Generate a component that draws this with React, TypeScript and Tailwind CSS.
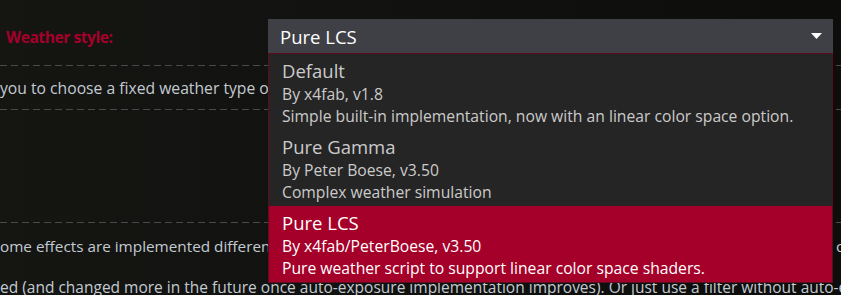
import React from "react";

const items = [
  {
    title: "Default",
    by: "By x4fab, v1.8",
    desc: "Simple built-in implementation, now with an linear color space option.",
    selected: false,
  },
  {
    title: "Pure Gamma",
    by: "By Peter Boese, v3.50",
    desc: "Complex weather simulation",
    selected: false,
  },
  {
    title: "Pure LCS",
    by: "By x4fab/PeterBoese, v3.50",
    desc: "Pure weather script to support linear color space shaders.",
    selected: true,
  },
];

function Dash() {
  return (
    <div className="h-px w-full bg-[repeating-linear-gradient(90deg,#4a4a4a_0px,#4a4a4a_7px,transparent_7px,transparent_11px)]" />
  );
}

export default function App() {
  return (
    <div className="relative w-[841px] h-[295px] overflow-hidden bg-gradient-to-r from-[#151612] via-[#111210] to-[#0d0d0c] font-['Open_Sans',sans-serif] text-[#c3cad2]">
      {/* background settings page */}
      <div className="flex flex-col">
        <div className="h-[65px] pl-[6px] pt-[25px]">
          <span className="text-[15.6px] leading-[22px] font-bold text-[#a4002a] tracking-[-0.45px]">
            Weather style:
          </span>
        </div>
        <Dash />
        <div className="h-[43px] pt-[11px] text-[15.7px] leading-[22px] whitespace-nowrap">
          <div className="w-[268px] overflow-hidden">
            you to choose a fixed weather type or let it change dynamically.
          </div>
        </div>
        <Dash />
        <div className="h-[112px]" />
        <Dash />
        <div className="pt-[12px] text-[15.3px] leading-[22px] whitespace-nowrap flex">
          <div className="w-[268px] overflow-hidden">
            ome effects are implemented differently depending on the selected weather style.
          </div>
          <div className="w-[565px]" />
          <div className="flex-1 overflow-hidden pl-[3px]">or</div>
        </div>
        <div className="pt-[19px] text-[15.5px] leading-[22px] whitespace-nowrap">
          ed (and changed more in the future once auto-exposure implementation improves). Or just use a filter without auto-exposure.
        </div>
      </div>

      {/* dropdown */}
      <div className="absolute left-[268px] top-[19px] w-[565px] flex flex-col">
        <div className="h-[34px] bg-[#3f3f46] flex items-center justify-between pl-[12px] pr-[11px] pt-[1px]">
          <span className="text-[18.5px] leading-[24px] text-white">Pure LCS</span>
          <svg width="11" height="6" viewBox="0 0 11 6" className="mb-[1px]">
            <path d="M0 0 L11 0 L5.5 6 Z" fill="#ffffff" />
          </svg>
        </div>
        <div className="border border-[#5e0b1f] bg-[#252525] flex flex-col">
          {items.map((it) => (
            <div
              key={it.title}
              className={
                it.selected
                  ? "h-[76px] pl-[13px] pt-[5px] bg-[#a50029] text-white"
                  : "h-[76px] pl-[13px] pt-[5px] text-[#cbcbcb]"
              }
            >
              <div className="text-[18.5px] leading-[24px]">{it.title}</div>
              <div className="text-[15.7px] leading-[22px]">{it.by}</div>
              <div className="text-[15.7px] leading-[22px]">{it.desc}</div>
            </div>
          ))}
        </div>
      </div>
    </div>
  );
}
